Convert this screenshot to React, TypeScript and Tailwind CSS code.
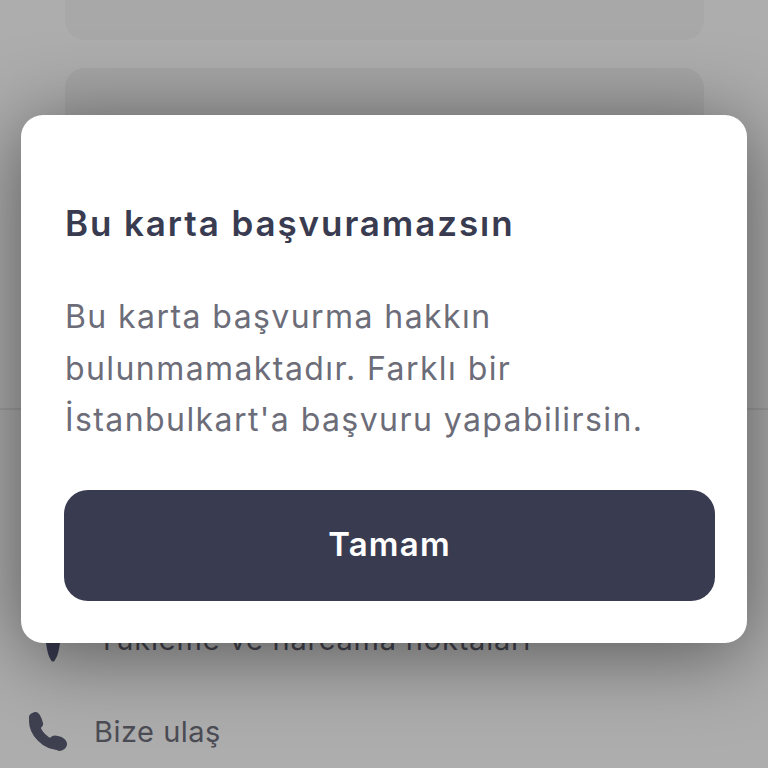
export default function App() {
  return (
    <div className="relative h-[768px] w-[768px] overflow-hidden bg-[#adadad] font-['Inter',sans-serif]">
      <div className="flex flex-col px-[65px]">
        <div className="h-[40px] w-[639px] rounded-b-[20px] bg-[#a8a8a8]" />
        <div className="mt-[28px] h-[250px] w-[639px] rounded-[20px] bg-[#a5a5a5]" />
      </div>
      <div className="mt-[90px] h-[2px] w-full bg-[#a0a0a0]" />
      <div className="mt-[208px] flex items-center gap-[24px] pl-[33px] text-[#45454f]">
        <svg width="40" height="44" viewBox="0 0 40 44" fill="#393c51">
          <path d="M4 6 C4 -6 36 -6 36 6 C36 16 29 19 27 25 C26 31 25 38 22 42 C21 44 19 44 18 42 C15 38 14 31 13 25 C11 19 4 16 4 6 Z" />
        </svg>
        <span className="text-[29px] tracking-[0.8px]">Yükleme ve harcama noktaları</span>
      </div>
      <div className="mt-[48px] flex items-center gap-[27px] pl-[28px] text-[#4c4c55]">
        <svg width="39" height="39" viewBox="0 0 39 39" className="shrink-0">
          <path d="M6 9 C6 20 17 33 31 33" fill="none" stroke="#3f4050" strokeWidth="10" strokeLinecap="round" />
          <path d="M1 7 C0 2 5 0 8 0 C12 1 14 7 15 11 C16 14 12 17 9 18 L3 16 Z" fill="#3f4050" />
          <path d="M21 27 C24 23 27 23 30 24 C35 25 39 28 39 32 C39 36 35 39 31 39 L24 36 Z" fill="#3f4050" />
        </svg>
        <span className="text-[29px] tracking-[0.5px]">Bize ulaş</span>
      </div>
      <div className="absolute left-[21px] top-[115px] flex h-[528px] w-[726px] flex-col rounded-[22px] bg-white pl-[44px] pr-[32px] pt-[86px] shadow-[0_10px_80px_rgba(0,0,0,0.5)]">
        <h1 className="text-[35px] font-semibold leading-[44px] tracking-[1.9px] text-[#393c51]">Bu karta başvuramazsın</h1>
        <p className="mt-[46px] text-[32px] leading-[51.5px] tracking-[1.42px] text-[#6c6d79]">
          Bu karta başvurma hakkın
          <br />
          bulunmamaktadır. Farklı bir
          <br />
          İstanbulkart'a başvuru yapabilirsin.
        </p>
        <button className="-ml-px mt-[44px] flex h-[111px] w-[651px] items-center justify-center rounded-[24px] bg-[#393c51] text-[33px] font-semibold tracking-[1.2px] text-white">
          Tamam
        </button>
      </div>
    </div>
  );
}
